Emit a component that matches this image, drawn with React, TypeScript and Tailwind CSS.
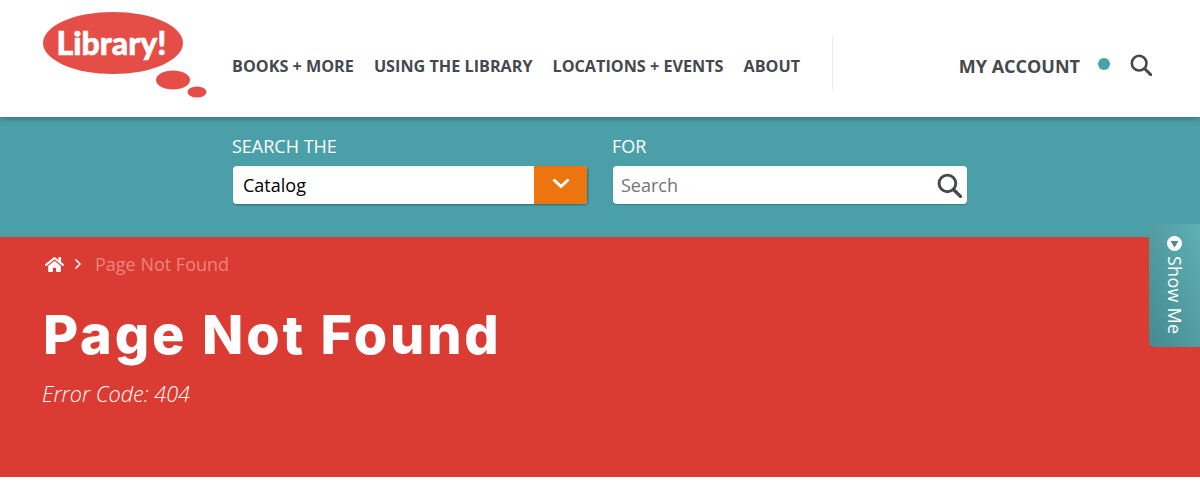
import { FaHome } from "react-icons/fa";
import { ChevronRight } from "lucide-react";

function SearchIcon({ className }: { className?: string }) {
  return (
    <svg viewBox="0 0 24 24" className={className} fill="none" stroke="#45494e" strokeWidth="2.8">
      <circle cx="10" cy="10" r="8" />
      <path d="M15.8 15.8 L22.5 22.5" strokeLinecap="round" strokeWidth="3.2" />
    </svg>
  );
}

function Logo() {
  return (
    <svg width="170" height="104" viewBox="0 0 170 104" className="block">
      <ellipse cx="73" cy="43" rx="70" ry="31" fill="#e44e46" />
      <ellipse cx="133" cy="80" rx="17" ry="9.5" fill="#e44e46" />
      <ellipse cx="157" cy="92" rx="9.5" ry="5.5" fill="#e44e46" />
      <text x="16.5" y="55" fill="#fff" stroke="#fff" strokeWidth="0.6" fontFamily="Lato, sans-serif" fontWeight="900" fontSize="33" textLength="110" lengthAdjust="spacingAndGlyphs">
        Library!
      </text>
    </svg>
  );
}

const nav = ["BOOKS + MORE", "USING THE LIBRARY", "LOCATIONS + EVENTS", "ABOUT"];

export default function App() {
  return (
    <div className="min-h-[489px] bg-white font-['Open_Sans',sans-serif] overflow-hidden">
      <header className="relative z-10 h-[117px] bg-white flex shadow-[0_2px_6px_rgba(0,0,0,0.25)]">
        <div className="w-[232px] shrink-0 pl-[40px]">
          <Logo />
        </div>
        <nav className="flex gap-5 pt-[55px] text-[16.2px] leading-[22px] font-bold text-[#45494e] h-full">
          {nav.map((n) => (
            <span key={n} className="whitespace-nowrap">{n}</span>
          ))}
        </nav>
        <div className="ml-8 mt-[36px] w-px h-[55px] bg-[#ececec]" />
        <div className="ml-auto pr-[48px] pt-[53px] flex items-start text-[#45494e]">
          <span className="text-[18px] leading-[26px] font-bold">MY ACCOUNT</span>
          <span className="ml-[18px] mt-[5px] w-3 h-3 rounded-full bg-[#45a3aa]" />
          <SearchIcon className="ml-[20px] mt-[1px] w-[22px] h-[22px]" />
        </div>
      </header>

      <section className="h-[120px] bg-[#4a9fa9] flex pl-[232px] pt-[17px] text-white">
        <div className="w-[356px]">
          <div className="text-[18px] leading-[25px]">SEARCH THE</div>
          <div className="mx-px mt-[7px] h-[38px] rounded-[4px] bg-white flex overflow-hidden shadow-[1px_1px_2px_rgba(0,0,0,0.35)]">
            <span className="flex-1 pl-[10px] text-[18px] leading-[38px] text-black">Catalog</span>
            <span className="w-[53px] bg-[#ec7510] flex justify-center pt-[8px]">
              <svg width="18" height="18" viewBox="0 0 18 18" fill="none" stroke="#fff" strokeWidth="3">
                <path d="M1.5 5.5 L9 12.5 L16.5 5.5" />
              </svg>
            </span>
          </div>
        </div>
        <div className="ml-[25px] w-[354px]">
          <div className="-ml-px text-[18px] leading-[25px]">FOR</div>
          <div className="mt-[7px] h-[38px] rounded-[4px] bg-white flex items-center justify-between pl-[8px] pr-[5px] shadow-[0_1px_1px_rgba(0,0,0,0.2)]">
            <span className="text-[18px] text-[#757575]">Search</span>
            <SearchIcon className="w-[25px] h-[25px]" />
          </div>
        </div>
      </section>

      <main className="relative h-[240px] bg-[#da3b32] pl-[43px] text-white">
        <div className="pt-[16px] flex items-center h-[38px]">
          <FaHome className="ml-[2px] w-[19px] h-[17px]" />
          <ChevronRight className="ml-[6px] w-[16px] h-[16px]" strokeWidth={2.5} />
          <span className="ml-[9px] text-[18px] leading-[24px] text-[#ee8480]">Page Not Found</span>
        </div>
        <h1 className="mt-[25px] font-['Inter',sans-serif] font-extrabold text-[54px] leading-[70px] tracking-[2.85px]">
          Page Not Found
        </h1>
        <p className="mt-[10px] text-[21.6px] leading-[28px] italic font-light -ml-px">Error Code: 404</p>

        <aside className="absolute right-0 -top-[13px] w-[51px] h-[123px] rounded-l-[5px] bg-gradient-to-tr from-[#458a90] to-[#5fb0b5] flex flex-col items-center pt-[12px]">
          <span className="w-[15px] h-[15px] rounded-full bg-white flex items-center justify-center">
            <svg width="9" height="8" viewBox="0 0 9 8"><path d="M0.5 1 H8.5 L4.5 7.5 Z" fill="#458a90" /></svg>
          </span>
          <span className="mt-[5px] text-[18px] leading-[24px] tracking-[0.25px] [writing-mode:vertical-rl] whitespace-nowrap">Show Me</span>
        </aside>
      </main>
    </div>
  );
}
